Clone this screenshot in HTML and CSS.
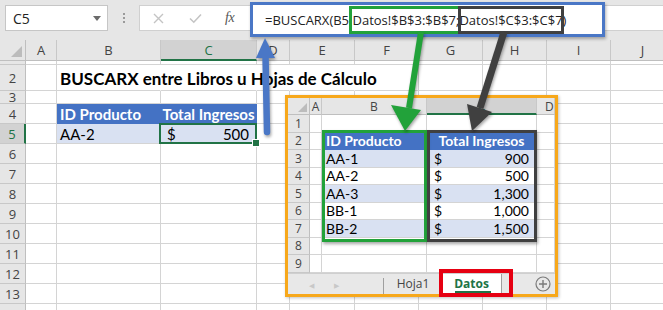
FILE: index.html
```html
<!DOCTYPE html>
<html lang="es">
<head>
<meta charset="utf-8">
<title>BUSCARX entre Libros u Hojas de Cálculo</title>
<link rel="stylesheet" href="styles.css">
</head>
<body>
<div class="app">
  <div class="topbar">
    <div class="namebox"><span>C5</span><span class="caret"></span></div>
    <div class="grip"><i></i><i></i><i></i></div>
    <div class="fxarea">
      <div class="fxbtns">
        <svg class="ic" width="11" height="11" viewBox="0 0 11 11"><path d="M1 1L10 10M10 1L1 10" stroke="#c4c4c4" stroke-width="1.4" fill="none"/></svg>
        <svg class="ic" width="13" height="11" viewBox="0 0 13 11"><path d="M1 5.5L4.8 9.2L12 1.5" stroke="#c4c4c4" stroke-width="1.6" fill="none"/></svg>
        <span class="fx">fx</span>
      </div>
      <div class="formula">=BUSCARX(B5;<span class="ref g">Datos!$B$3:$B$7;</span><span class="ref k">Datos!$C$3:$C$7</span>)</div>
    </div>
  </div>

  <div class="sheet">
    <div class="corner"></div><div class="ch">A</div><div class="ch">B</div><div class="ch sel">C</div><div class="ch">D</div><div class="ch">E</div><div class="ch">F</div><div class="ch">G</div><div class="ch">H</div><div class="ch">I</div><div class="ch">J</div>

    <div class="rh"></div><div class="c"></div><div class="c"></div><div class="c"></div><div class="c"></div><div class="c"></div><div class="c"></div><div class="c"></div><div class="c"></div><div class="c"></div><div class="c"></div>

    <div class="rh">2</div><div class="c"></div><div class="c nr titlecell"><span class="title">BUSCARX entre Libros u Hojas de Cálculo</span></div><div class="c nr"></div><div class="c nr"></div><div class="c nr"></div><div class="c"></div><div class="c"></div><div class="c"></div><div class="c"></div><div class="c"></div>

    <div class="rh">3</div><div class="c"></div><div class="c"></div><div class="c"></div><div class="c"></div><div class="c"></div><div class="c"></div><div class="c"></div><div class="c"></div><div class="c"></div><div class="c"></div>

    <div class="rh">4</div><div class="c"></div><div class="c th">ID Producto</div><div class="c th center">Total Ingresos</div><div class="c"></div><div class="c"></div><div class="c"></div><div class="c"></div><div class="c"></div><div class="c"></div><div class="c"></div>

    <div class="rh sel">5</div><div class="c"></div><div class="c td">AA-2</div><div class="c td money cur"><span>$</span><span>500</span></div><div class="c"></div><div class="c"></div><div class="c"></div><div class="c"></div><div class="c"></div><div class="c"></div><div class="c"></div>

    <div class="rh">6</div><div class="c"></div><div class="c"></div><div class="c"></div><div class="c"></div><div class="c"></div><div class="c"></div><div class="c"></div><div class="c"></div><div class="c"></div><div class="c"></div>
    <div class="rh">7</div><div class="c"></div><div class="c"></div><div class="c"></div><div class="c"></div><div class="c"></div><div class="c"></div><div class="c"></div><div class="c"></div><div class="c"></div><div class="c"></div>
    <div class="rh">8</div><div class="c"></div><div class="c"></div><div class="c"></div><div class="c"></div><div class="c"></div><div class="c"></div><div class="c"></div><div class="c"></div><div class="c"></div><div class="c"></div>
    <div class="rh">9</div><div class="c"></div><div class="c"></div><div class="c"></div><div class="c"></div><div class="c"></div><div class="c"></div><div class="c"></div><div class="c"></div><div class="c"></div><div class="c"></div>
    <div class="rh">10</div><div class="c"></div><div class="c"></div><div class="c"></div><div class="c"></div><div class="c"></div><div class="c"></div><div class="c"></div><div class="c"></div><div class="c"></div><div class="c"></div>
    <div class="rh">11</div><div class="c"></div><div class="c"></div><div class="c"></div><div class="c"></div><div class="c"></div><div class="c"></div><div class="c"></div><div class="c"></div><div class="c"></div><div class="c"></div>
    <div class="rh">12</div><div class="c"></div><div class="c"></div><div class="c"></div><div class="c"></div><div class="c"></div><div class="c"></div><div class="c"></div><div class="c"></div><div class="c"></div><div class="c"></div>
    <div class="rh">13</div><div class="c"></div><div class="c"></div><div class="c"></div><div class="c"></div><div class="c"></div><div class="c"></div><div class="c"></div><div class="c"></div><div class="c"></div><div class="c"></div>
    <div class="rh">14</div><div class="c"></div><div class="c"></div><div class="c"></div><div class="c"></div><div class="c"></div><div class="c"></div><div class="c"></div><div class="c"></div><div class="c"></div><div class="c"></div>
  </div>

  <div class="shot">
    <div class="mini">
      <div class="corner"></div><div class="ch">A</div><div class="ch">B</div><div class="ch sel">C</div><div class="ch dcol">D</div>
      <div class="rh">1</div><div class="c"></div><div class="c"></div><div class="c"></div><div class="c"></div>
      <div class="rh">2</div><div class="c"></div><div class="c th">ID Producto</div><div class="c th center">Total Ingresos</div><div class="c"></div>
      <div class="rh">3</div><div class="c"></div><div class="c td">AA-1</div><div class="c td money"><span>$</span><span>900</span></div><div class="c"></div>
      <div class="rh">4</div><div class="c"></div><div class="c tw">AA-2</div><div class="c tw money"><span>$</span><span>500</span></div><div class="c"></div>
      <div class="rh">5</div><div class="c"></div><div class="c td">AA-3</div><div class="c td money"><span>$</span><span>1,300</span></div><div class="c"></div>
      <div class="rh">6</div><div class="c"></div><div class="c tw">BB-1</div><div class="c tw money"><span>$</span><span>1,000</span></div><div class="c"></div>
      <div class="rh">7</div><div class="c"></div><div class="c td">BB-2</div><div class="c td money"><span>$</span><span>1,500</span></div><div class="c"></div>
      <div class="rh">8</div><div class="c"></div><div class="c"></div><div class="c"></div><div class="c"></div>
      <div class="rh">9</div><div class="c"></div><div class="c"></div><div class="c"></div><div class="c"></div>
    </div>
    <div class="tabbar">
      <div class="nav"><span class="navarrow">&#9664;</span><span class="navarrow">&#9654;</span></div>
      <div class="tab">Hoja1</div>
      <div class="tab on">Datos</div>
      <div class="spacer"></div>
      <svg class="plus" width="16" height="16" viewBox="0 0 16 16"><circle cx="8" cy="8" r="7" fill="none" stroke="#7a7a7a" stroke-width="1.2"/><path d="M8 4V12M4 8H12" stroke="#7a7a7a" stroke-width="1.4"/></svg>
    </div>
    <div class="hl green"></div>
    <div class="hl dark"></div>
    <div class="hl red"></div>
  </div>

  <svg class="arrows" width="663" height="310" viewBox="0 0 663 310">
    <g class="shd">
      <line x1="267" y1="132" x2="265.5" y2="55" stroke="#4a77c6" stroke-width="6.5" stroke-linecap="round"/>
      <polygon points="265,38 256,58 275,58" fill="#4a77c6"/>
      <line x1="421" y1="32" x2="409" y2="108" stroke="#22a23a" stroke-width="6"/>
      <polygon points="405,131 391,105 421,110" fill="#22a23a"/>
      <line x1="504" y1="32" x2="480" y2="108" stroke="#404040" stroke-width="7"/>
      <polygon points="472,131 467,104 492,112" fill="#404040"/>
    </g>
  </svg>
</div>
</body>
</html>
```

FILE: styles.css
```css
* { box-sizing: border-box; margin: 0; padding: 0; }
body { margin: 0; background: #fff; font-family: "Lato", "Liberation Sans", sans-serif; }

.app { position: relative; width: 663px; height: 310px; overflow: hidden; background: #fff; }

/* ---------- top / formula bar ---------- */
.topbar { height: 40px; background: #e6e6e6; display: flex; align-items: flex-start; padding: 5px 0 0 5px; }
.namebox { width: 103px; height: 26px; background: #fff; border: 1px solid #c6c6c6; display: flex; align-items: center; justify-content: space-between; padding: 0 6px 0 7px; font: 14px "Open Sans", sans-serif; color: #222; }
.caret { width: 0; height: 0; border-left: 4.5px solid transparent; border-right: 4.5px solid transparent; border-top: 5px solid #6b6b6b; }
.grip { width: 31px; height: 26px; display: flex; flex-direction: column; align-items: center; justify-content: center; gap: 2px; }
.grip i { display: block; width: 2px; height: 2px; background: #9a9a9a; }
.fxarea { position: relative; flex: 1; height: 26px; background: #fff; border: 1px solid #d0d0d0; border-right: none; display: flex; align-items: center; }
.fxbtns { display: flex; align-items: center; padding-left: 13px; gap: 25px; }
.fxbtns .fx { font: italic 14px "Liberation Serif", serif; color: #555; margin-left: -2px; letter-spacing: -0.5px; }

.formula { position: absolute; left: 110px; top: -4px; width: 355px; height: 35px; border: 3px solid #4a77c6; background: #fff; display: flex; align-items: center; padding-left: 12px; font: 13px "Open Sans", sans-serif; color: #222; white-space: nowrap; box-shadow: 1px 2px 3px rgba(0,0,0,.3); }
.ref { position: relative; }
.ref::after { content: ""; position: absolute; top: -5px; bottom: -5px; left: -3px; right: -2px; border: 3px solid; }
.ref.g::after { border-color: #22a23a; }
.ref.k::after { border-color: #404040; left: -1px; right: -1px; }

/* ---------- main sheet ---------- */
.sheet { display: grid; grid-template-columns: 26px 31px 104px 96px 33px 65px 64px 64px 64px 64px 64px; grid-template-rows: 21px 4px 26px 13px repeat(11, 20px); }

.corner { background: #e6e6e6; border-right: 1px solid #bfbfbf; border-bottom: 1px solid #bfbfbf; position: relative; }
.corner::after { content: ""; position: absolute; right: 3px; bottom: 3px; width: 0; height: 0; border-left: 11px solid transparent; border-bottom: 11px solid #bcbcbc; }
.ch { background: #e6e6e6; border-right: 1px solid #c8c8c8; border-bottom: 1px solid #bfbfbf; display: flex; align-items: center; justify-content: center; font: 13px "Open Sans", sans-serif; color: #444; }
.ch.sel { background: #d2d2d2; border-bottom: 2px solid #217346; color: #217346; }
.rh { background: #e6e6e6; border-right: 1px solid #bfbfbf; border-bottom: 1px solid #c8c8c8; display: flex; align-items: center; justify-content: center; font: 13px "Open Sans", sans-serif; color: #444; overflow: hidden; }
.rh.sel { background: #d2d2d2; border-right: 2px solid #217346; color: #217346; }

.c { border-right: 1px solid #d4d4d4; border-bottom: 1px solid #d4d4d4; display: flex; align-items: center; padding: 0 3px; white-space: nowrap; font-size: 15px; color: #000; min-width: 0; }
.c.nr { border-right-color: transparent; }
.titlecell { overflow: visible; position: relative; z-index: 1; }
.title { font-weight: 700; font-size: 17px; padding-top: 2px; }

.th { background: #4472c4; color: #fff; font-weight: 700; border-right-color: #4472c4; border-bottom-color: #4472c4; }
.th.center { justify-content: center; }
.td { background: #d9e1f2; border-right-color: #d9e1f2; }
.tw { background: #fff; border-right-color: #fff; }
.money { justify-content: space-between; padding: 0 7px 0 6px; }
.cur { position: relative; }
.cur::after { content: ""; position: absolute; left: -2px; right: -1px; top: -1px; bottom: -1px; border: 2px solid #217346; }
.cur::before { content: ""; position: absolute; right: -4px; bottom: -4px; width: 6px; height: 6px; background: #217346; border: 1px solid #fff; z-index: 2; }

/* ---------- embedded screenshot ---------- */
.shot { position: absolute; left: 285px; top: 95px; width: 273px; height: 202px; border: 3px solid #f7a81b; background: #fff; display: flex; flex-direction: column; z-index: 2; box-shadow: 1px 1px 3px rgba(0,0,0,.25); }
.mini { display: grid; grid-template-columns: 22px 12px 105px 110px 18px; grid-template-rows: 17px repeat(9, 17.5px); overflow: hidden; }
.mini .ch, .mini .rh { font-size: 12px; }
.mini .ch.dcol { justify-content: flex-start; padding-left: 8px; overflow: hidden; }
.mini .corner::after { border-left-width: 9px; border-bottom-width: 9px; right: 2px; bottom: 2px; }
.mini .c { font-size: 14px; padding: 0 4px; }
.mini .money { padding: 0 7px; }

.tabbar { flex: 1; background: #e8e8e8; border-top: 1px solid #cfcfcf; display: flex; align-items: stretch; font: 12px "Open Sans", sans-serif; }
.nav { width: 96px; display: flex; align-items: center; gap: 20px; padding-left: 21px; border-right: 1px solid #9f9f9f; margin-top: 4px; }
.navarrow { font-size: 7px; color: #c8c8c8; }
.tab { width: 58px; display: flex; align-items: center; justify-content: center; color: #444; }
.tab.on { width: 60px; background: #fff; color: #217346; font-weight: 700; border-right: 1px solid #9f9f9f; position: relative; }
.tab.on::after { content: ""; position: absolute; left: 13px; right: 10px; bottom: 1px; height: 2px; background: #217346; }
.spacer { flex: 1; }
.plus { align-self: center; margin-right: 4px; }

.hl { position: absolute; border: 3px solid; pointer-events: none; }
.hl.green { left: 34px; top: 32px; width: 105px; height: 112px; border-color: #22a23a; box-shadow: 1px 2px 3px rgba(0,0,0,.35); }
.hl.dark { left: 139px; top: 32px; width: 110px; height: 112px; border-color: #404040; box-shadow: 1px 2px 3px rgba(0,0,0,.35); }
.hl.red { left: 151px; top: 171px; width: 74px; height: 28px; border: 4px solid #e60012; }

/* ---------- arrows ---------- */
.arrows { position: absolute; left: 0; top: 0; z-index: 5; pointer-events: none; }
.shd { filter: drop-shadow(1px 2px 1.5px rgba(0,0,0,.35)); }
```
